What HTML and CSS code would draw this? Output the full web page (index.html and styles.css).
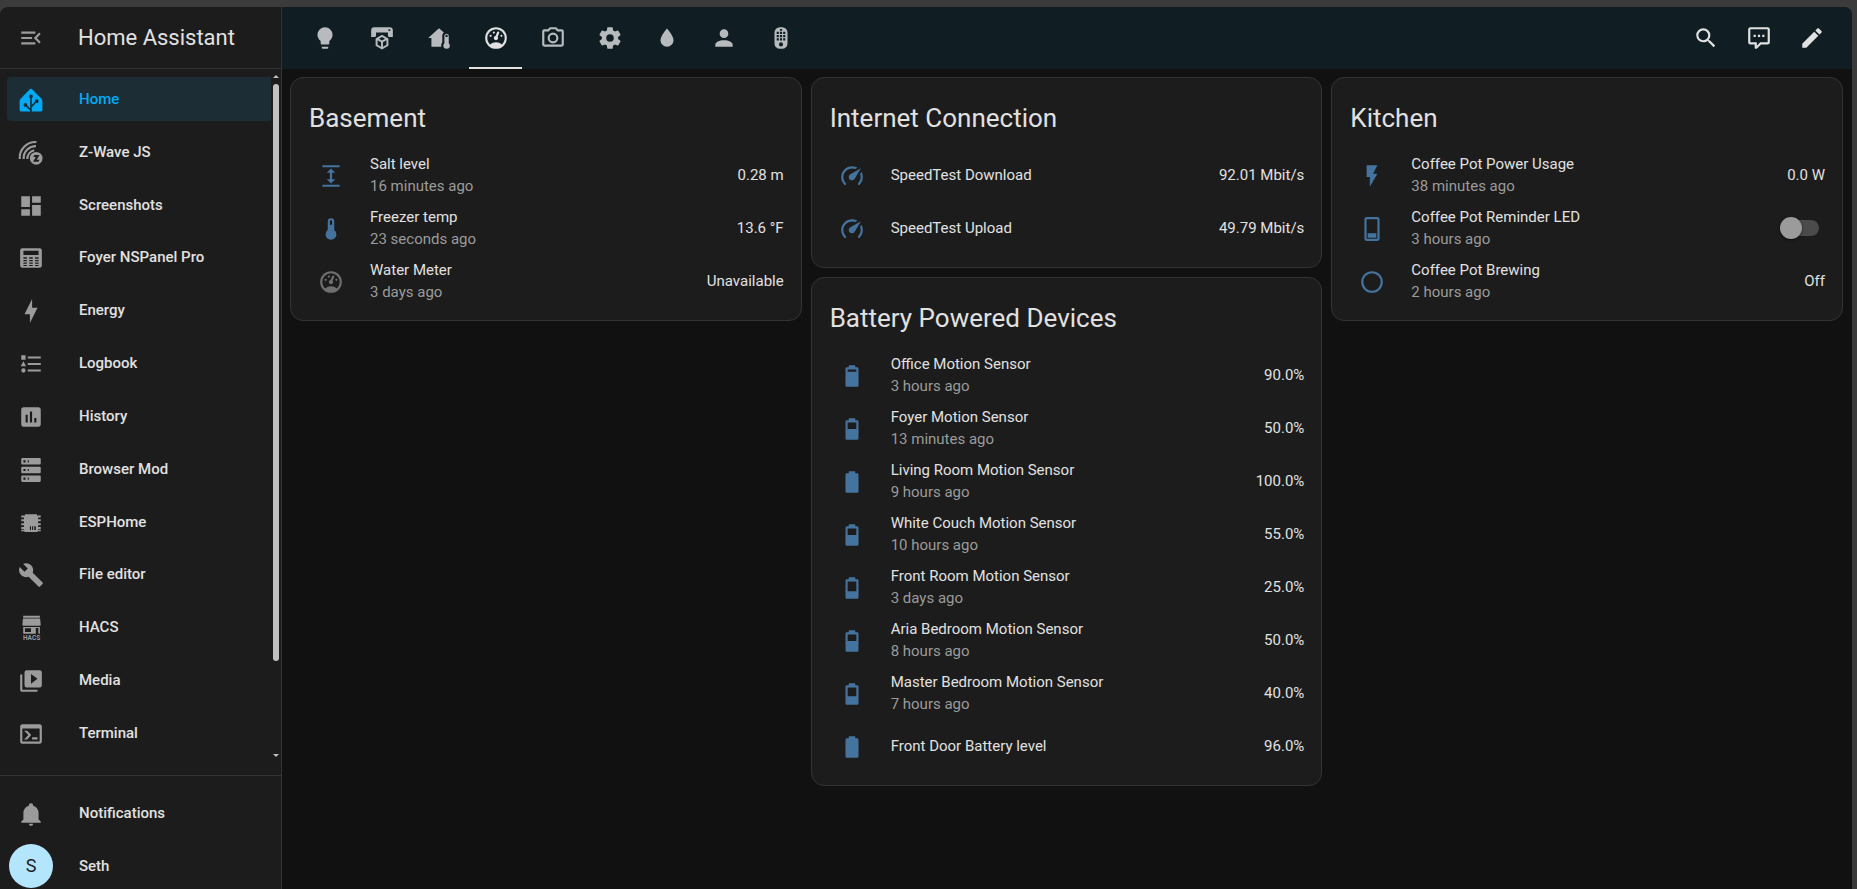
FILE: index.html
```html
<!DOCTYPE html>
<html lang="en">
<head>
<meta charset="utf-8">
<meta name="viewport" content="width=device-width, initial-scale=1">
<title>Home Assistant</title>
<link rel="stylesheet" href="styles.css">
</head>
<body>
<svg class="sprite" aria-hidden="true">
  <symbol id="menu" viewBox="0 0 24 24"><path d="M21,15.61L19.59,17L14.58,12L19.59,7L21,8.39L17.44,12L21,15.61M3,6H16V8H3V6M3,13V11H13V13H3M3,18V16H16V18H3Z"/></symbol>
  <symbol id="ha" viewBox="0 0 24 24"><path d="M11.2 1.9Q12 1.1 12.8 1.9L21.6 10.8Q22.5 11.8 22.5 13V21.2Q22.5 22.5 21.2 22.5H2.8Q1.5 22.5 1.5 21.2V13Q1.5 11.8 2.4 10.8Z"/><g class="tree"><path d="M12 9V23M12 18.4L17.2 13.2M12 21.6L7.2 16.8"/><circle cx="12" cy="8.6" r="1"/><circle cx="17.3" cy="13.1" r="1"/><circle cx="6.9" cy="16.5" r="1"/></g></symbol>
  <symbol id="zwave" viewBox="0 0 24 24"><path d="M16.8,11A5.9,5.9 0 1,0 16.8,22.8A5.9,5.9 0 1,0 16.8,11M18.8,20H13.9L16.5,15.7H14.2L15.1,13.9H19.8L17.2,18.2H19.8L18.8,20Z"/><path class="line" d="M1.6 17.5A14.6 14.6 0 0 1 17 1.9M5.2 17.5A11.4 11.4 0 0 1 16.6 5.6M8.6 17.5A8.4 8.4 0 0 1 15 9.4"/></symbol>
  <symbol id="board" viewBox="0 0 24 24"><path d="M13,3V9H21V3M13,21H21V11H13M3,21H11V15H3M3,13H11V3H3V13Z"/></symbol>
  <symbol id="panel" viewBox="0 0 24 24"><path fill-rule="evenodd" d="M4 3H20A2 2 0 0 1 22 5V19A2 2 0 0 1 20 21H4A2 2 0 0 1 2 19V5A2 2 0 0 1 4 3M5 5.2V9.2H19V5.2ZM5 11.2V12.6H8.2V11.2ZM10.4 11.2V12.6H13.6V11.2ZM15.8 11.2V12.6H19V11.2ZM5 13.8V15.1H8.2V13.8ZM10.4 13.8V15.1H13.6V13.8ZM15.8 13.8V15.1H19V13.8ZM5 16.2V17.4H8.2V16.2ZM10.4 16.2V17.4H13.6V16.2ZM15.8 16.2V17.4H19V16.2ZM5 18.4V19.4H8.2V18.4ZM10.4 18.4V19.4H13.6V18.4ZM15.8 18.4V19.4H19V18.4Z"/></symbol>
  <symbol id="energy" viewBox="0 0 24 24"><path d="M11 15H6L13 1V9H18L11 23V15Z"/></symbol>
  <symbol id="list" viewBox="0 0 24 24"><path d="M5,9.5L7.5,14H2.5L5,9.5M3,4H7V8H3V4M5,20A2,2 0 0,0 7,18A2,2 0 0,0 5,16A2,2 0 0,0 3,18A2,2 0 0,0 5,20M9,5V7H21V5H9M9,19H21V17H9V19M9,11V13H21V11H9Z"/></symbol>
  <symbol id="chart" viewBox="0 0 24 24"><path fill-rule="evenodd" d="M9 17H7V10H9V17M13 17H11V7H13V17M17 17H15V13H17V17M19 3H5C3.9 3 3 3.9 3 5V19C3 20.1 3.9 21 5 21H19C20.1 21 21 20.1 21 19V5C21 3.9 20.1 3 19 3Z"/></symbol>
  <symbol id="server" viewBox="0 0 24 24"><path fill-rule="evenodd" d="M4,1H20A1,1 0 0,1 21,2V6A1,1 0 0,1 20,7H4A1,1 0 0,1 3,6V2A1,1 0 0,1 4,1M4,9H20A1,1 0 0,1 21,10V14A1,1 0 0,1 20,15H4A1,1 0 0,1 3,14V10A1,1 0 0,1 4,9M4,17H20A1,1 0 0,1 21,18V22A1,1 0 0,1 20,23H4A1,1 0 0,1 3,22V18A1,1 0 0,1 4,17M9,5H10V3H9V5M9,13H10V11H9V13M9,21H10V19H9V21M5,3V5H7V3H5M5,11V13H7V11H5M5,19V21H7V19H5Z"/></symbol>
  <symbol id="chip" viewBox="0 0 24 24"><path fill-rule="evenodd" d="M6.5 4H17.5V5H21V7H18.5V8.6H21V10.4H18.5V12.2H21V14H18.5V15.8H21V17.6H18.5V18.2H21V19.6H18V20.4H6V19.6H3V18.2H5.5V17.6H3V15.8H5.5V14H3V12.2H5.5V10.4H3V8.6H5.5V7H3V5H6.5ZM11 15V18.4H12V15ZM13 15V18.4H14V15ZM15 15V18.4H16.4V15Z"/></symbol>
  <symbol id="wrench" viewBox="0 0 24 24"><path d="M22.7,19L13.6,9.9C14.5,7.6 14,4.9 12.1,3C10.1,1 7.1,0.6 4.7,1.7L9,6L6,9L1.6,4.7C0.4,7.1 0.9,10.1 2.9,12.1C4.8,14 7.5,14.5 9.8,13.6L18.9,22.7C19.3,23.1 19.9,23.1 20.3,22.7L22.6,20.4C23.1,20 23.1,19.3 22.7,19Z"/></symbol>
  <symbol id="hacs" viewBox="0 0 24 24" overflow="visible"><path fill-rule="evenodd" d="M4.8 .6H20.2V2.6H4.8ZM4.6 3.2H20.4L21 9Q21 10 20 10H5Q4 10 4 9ZM4.8 11H20.2V17.2H18.8V12H16.4V17.2H4.8ZM6.4 12.2V15.8H12V12.2Z"/><text x="12.5" y="23.2" text-anchor="middle" font-size="6">HACS</text></symbol>
  <symbol id="media" viewBox="0 0 24 24"><path fill-rule="evenodd" d="M4,6H2V20A2,2 0 0,0 4,22H18V20H4V6M20,2H8A2,2 0 0,0 6,4V16A2,2 0 0,0 8,18H20A2,2 0 0,0 22,16V4A2,2 0 0,0 20,2M12,14.5V5.5L18,10L12,14.5Z"/></symbol>
  <symbol id="console" viewBox="0 0 24 24"><path d="M20,19V7H4V19H20M20,3A2,2 0 0,1 22,5V19A2,2 0 0,1 20,21H4A2,2 0 0,1 2,19V5C2,3.89 2.9,3 4,3H20M13,17V15H18V17H13M9.58,13L5.57,9H8.4L11.7,12.3C12.09,12.69 12.09,13.33 11.7,13.72L8.42,17H5.59L9.58,13Z"/></symbol>
  <symbol id="bell" viewBox="0 0 24 24"><path d="M21,19V20H3V19L5,17V11C5,7.9 7.03,5.17 10,4.29C10,4.19 10,4.1 10,4A2,2 0 0,1 12,2A2,2 0 0,1 14,4C14,4.1 14,4.19 14,4.29C16.97,5.17 19,7.9 19,11V17L21,19M14,21A2,2 0 0,1 12,23A2,2 0 0,1 10,21"/></symbol>
  <symbol id="bulb" viewBox="0 0 24 24"><path d="M12,2A7,7 0 0,0 5,9C5,11.38 6.19,13.47 8,14.74V17A1,1 0 0,0 9,18H15A1,1 0 0,0 16,17V14.74C17.81,13.47 19,11.38 19,9A7,7 0 0,0 12,2M9,21A1,1 0 0,0 10,22H14A1,1 0 0,0 15,21V20H9V21Z"/></symbol>
  <symbol id="printer" viewBox="0 0 24 24"><path fill-rule="evenodd" d="M5 2H19A3 3 0 0 1 22 5V11H18.5L17.5 10.3V7H6.5V10.3L5.5 11H2V5A3 3 0 0 1 5 2M18 4V5.6H19.6V4Z"/><path fill-rule="evenodd" d="M12 9L17.9 12.4V19.2L12 22.6L6.1 19.2V12.4ZM12 11L9.2 12.6L12 14.2L14.8 12.6ZM7.9 14.1V18.2L11.1 20V15.9ZM16.1 14.1L12.9 15.9V20L16.1 18.2Z"/></symbol>
  <symbol id="housetemp" viewBox="0 0 24 24"><path fill-rule="evenodd" d="M19 8C20.11 8 21 8.9 21 10V16.76C21.61 17.31 22 18.11 22 19A3 3 0 0 1 16 19C16 18.11 16.39 17.31 17 16.76V10C17 8.9 17.9 8 19 8M19 9C18.45 9 18 9.45 18 10V11H20V10C20 9.45 19.55 9 19 9M12 3L2 12H5V20H14.1C14.03 19.67 14 19.34 14 19C14 17.84 14.4 16.74 15 15.87V10C15 8.72 15.6 7.6 16.5 6.87L12 3Z"/></symbol>
  <symbol id="gauge" viewBox="0 0 24 24"><path d="M12,2A10,10 0 0,0 2,12A10,10 0 0,0 12,22A10,10 0 0,0 22,12A10,10 0 0,0 12,2M12,4A8,8 0 0,1 20,12C20,14.4 19,16.5 17.3,18C15.9,16.7 14,16 12,16C10,16 8.2,16.7 6.7,18C5,16.5 4,14.4 4,12A8,8 0 0,1 12,4M14,5.89C13.62,5.9 13.26,6.15 13.1,6.54L11.81,9.77L11.71,10C11,10.13 10.41,10.6 10.14,11.26C9.73,12.29 10.23,13.45 11.26,13.86C12.29,14.27 13.45,13.77 13.86,12.74C14.12,12.08 14,11.32 13.57,10.76L13.67,10.5L14.96,7.29L14.97,7.26C15.17,6.75 14.92,6.17 14.41,5.96C14.28,5.91 14.15,5.89 14,5.89M10,6A1,1 0 0,0 9,7A1,1 0 0,0 10,8A1,1 0 0,0 11,7A1,1 0 0,0 10,6M7,9A1,1 0 0,0 6,10A1,1 0 0,0 7,11A1,1 0 0,0 8,10A1,1 0 0,0 7,9M17,9A1,1 0 0,0 16,10A1,1 0 0,0 17,11A1,1 0 0,0 18,10A1,1 0 0,0 17,9Z"/></symbol>
  <symbol id="camera" viewBox="0 0 24 24"><path d="M20,4H16.83L15,2H9L7.17,4H4A2,2 0 0,0 2,6V18A2,2 0 0,0 4,20H20A2,2 0 0,0 22,18V6A2,2 0 0,0 20,4M20,18H4V6H8.05L9.88,4H14.12L15.95,6H20V18M12,7A5,5 0 0,0 7,12A5,5 0 0,0 12,17A5,5 0 0,0 17,12A5,5 0 0,0 12,7M12,15A3,3 0 0,1 9,12A3,3 0 0,1 12,9A3,3 0 0,1 15,12A3,3 0 0,1 12,15Z"/></symbol>
  <symbol id="cog" viewBox="0 0 24 24"><path d="M12,15.5A3.5,3.5 0 0,1 8.5,12A3.5,3.5 0 0,1 12,8.5A3.5,3.5 0 0,1 15.5,12A3.5,3.5 0 0,1 12,15.5M19.43,12.97C19.47,12.65 19.5,12.33 19.5,12C19.5,11.67 19.47,11.34 19.43,11L21.54,9.37C21.73,9.22 21.78,8.95 21.66,8.73L19.66,5.27C19.54,5.05 19.27,4.96 19.05,5.05L16.56,6.05C16.04,5.66 15.5,5.32 14.87,5.07L14.5,2.42C14.46,2.18 14.25,2 14,2H10C9.75,2 9.54,2.18 9.5,2.42L9.13,5.07C8.5,5.32 7.96,5.66 7.44,6.05L4.95,5.05C4.73,4.96 4.46,5.05 4.34,5.27L2.34,8.73C2.21,8.95 2.27,9.22 2.46,9.37L4.57,11C4.53,11.34 4.5,11.67 4.5,12C4.5,12.33 4.53,12.65 4.57,12.97L2.46,14.63C2.27,14.78 2.21,15.05 2.34,15.27L4.34,18.73C4.46,18.95 4.73,19.03 4.95,18.95L7.44,17.94C7.96,18.34 8.5,18.68 9.13,18.93L9.5,21.58C9.54,21.82 9.75,22 10,22H14C14.25,22 14.46,21.82 14.5,21.58L14.87,18.93C15.5,18.67 16.04,18.34 16.56,17.94L19.05,18.95C19.27,19.03 19.54,18.95 19.66,18.73L21.66,15.27C21.78,15.05 21.73,14.78 21.54,14.63L19.43,12.97Z"/></symbol>
  <symbol id="water" viewBox="0 0 24 24"><path d="M12,20A6,6 0 0,1 6,14C6,10 12,3.25 12,3.25C12,3.25 18,10 18,14A6,6 0 0,1 12,20Z"/></symbol>
  <symbol id="account" viewBox="0 0 24 24"><path d="M12,4A4,4 0 0,1 16,8A4,4 0 0,1 12,12A4,4 0 0,1 8,8A4,4 0 0,1 12,4M12,14C16.42,14 20,15.79 20,18V20H4V18C4,15.79 7.58,14 12,14Z"/></symbol>
  <symbol id="remote" viewBox="0 0 24 24"><path fill-rule="evenodd" d="M11 2H13A5 5 0 0 1 18 7V17A5 5 0 0 1 13 22H11A5 5 0 0 1 6 17V7A5 5 0 0 1 11 2M11 3.6V5.2H13V3.6ZM8 6.2V8.2H10V6.2ZM11 6.2V8.2H13V6.2ZM14 6.2V8.2H16V6.2ZM8 9.2V11.2H10V9.2ZM11 9.2V11.2H13V9.2ZM14 9.2V11.2H16V9.2ZM8 12.2V14.2H10V12.2ZM11 12.2V14.2H13V12.2ZM14 12.2V14.2H16V12.2ZM12 16A1.9 1.9 0 0 0 12 19.8A1.9 1.9 0 0 0 12 16Z"/></symbol>
  <symbol id="search" viewBox="0 0 24 24"><path d="M9.5,3A6.5,6.5 0 0,1 16,9.5C16,11.11 15.41,12.59 14.44,13.73L14.71,14H15.5L20.5,19L19,20.5L14,15.5V14.71L13.73,14.44C12.59,15.41 11.11,16 9.5,16A6.5,6.5 0 0,1 3,9.5A6.5,6.5 0 0,1 9.5,3M9.5,5C7,5 5,7 5,9.5C5,12 7,14 9.5,14C12,14 14,12 14,9.5C14,7 12,5 9.5,5Z"/></symbol>
  <symbol id="comment" viewBox="0 0 24 24"><path d="M9,22A1,1 0 0,1 8,21V18H4A2,2 0 0,1 2,16V4C2,2.89 2.9,2 4,2H20A2,2 0 0,1 22,4V16A2,2 0 0,1 20,18H13.9L10.2,21.71C10,21.9 9.75,22 9.5,22V22H9M10,16V19.08L13.08,16H20V4H4V16H10M17,11H15V9H17V11M13,11H11V9H13V11M9,11H7V9H9V11Z"/></symbol>
  <symbol id="pencil" viewBox="0 0 24 24"><path d="M20.71,7.04C21.1,6.65 21.1,6 20.71,5.63L18.37,3.29C18,2.9 17.35,2.9 16.96,3.29L15.12,5.12L18.87,8.87M3,17.25V21H6.75L17.81,9.93L14.06,6.18L3,17.25Z"/></symbol>
  <symbol id="level" viewBox="0 0 24 24"><path d="M4 2H20V4H4ZM4 20H20V22H4ZM12 5L16 9H13V15H16L12 19L8 15H11V9H8Z"/></symbol>
  <symbol id="thermo" viewBox="0 0 24 24"><path fill-rule="evenodd" d="M15 13V5A3 3 0 0 0 9 5V13A5 5 0 1 0 15 13M12 4A1 1 0 0 1 13 5V8H11V5A1 1 0 0 1 12 4Z"/></symbol>
  <symbol id="speed" viewBox="0 0 24 24"><path d="M12,16A3,3 0 0,1 9,13C9,11.88 9.61,10.9 10.5,10.39L20.21,4.77L14.68,14.35C14.18,15.33 13.17,16 12,16M12,3C13.81,3 15.5,3.5 16.97,4.32L14.87,5.53C14,5.19 13,5 12,5A8,8 0 0,0 4,13C4,15.21 4.89,17.21 6.34,18.65H6.35C6.74,19.04 6.74,19.67 6.35,20.06C5.96,20.45 5.32,20.45 4.93,20.07V20.07C3.12,18.26 2,15.76 2,13A10,10 0 0,1 12,3M22,13C22,15.76 20.88,18.26 19.07,20.07V20.07C18.68,20.45 18.05,20.45 17.66,20.06C17.27,19.67 17.27,19.04 17.66,18.65V18.65C19.11,17.2 20,15.21 20,13C20,12 19.81,11 19.46,10.1L20.67,8C21.5,9.5 22,11.18 22,13Z"/></symbol>
  <symbol id="bat100" viewBox="0 0 24 24"><path d="M16.67,4H15V2H9V4H7.33A1.33,1.33 0 0,0 6,5.33V20.67C6,21.4 6.6,22 7.33,22H16.67A1.33,1.33 0 0,0 18,20.67V5.33C18,4.6 17.4,4 16.67,4Z"/></symbol>
  <symbol id="bat90" viewBox="0 0 24 24"><path fill-rule="evenodd" d="M16.67,4H15V2H9V4H7.33A1.33,1.33 0 0,0 6,5.33V20.67C6,21.4 6.6,22 7.33,22H16.67A1.33,1.33 0 0,0 18,20.67V5.33C18,4.6 17.4,4 16.67,4M8 6H16V8H8Z"/></symbol>
  <symbol id="bat50" viewBox="0 0 24 24"><path fill-rule="evenodd" d="M16.67,4H15V2H9V4H7.33A1.33,1.33 0 0,0 6,5.33V20.67C6,21.4 6.6,22 7.33,22H16.67A1.33,1.33 0 0,0 18,20.67V5.33C18,4.6 17.4,4 16.67,4M8 6H16V12H8Z"/></symbol>
  <symbol id="bat40" viewBox="0 0 24 24"><path fill-rule="evenodd" d="M16.67,4H15V2H9V4H7.33A1.33,1.33 0 0,0 6,5.33V20.67C6,21.4 6.6,22 7.33,22H16.67A1.33,1.33 0 0,0 18,20.67V5.33C18,4.6 17.4,4 16.67,4M8 6H16V14H8Z"/></symbol>
  <symbol id="bat25" viewBox="0 0 24 24"><path fill-rule="evenodd" d="M16.67,4H15V2H9V4H7.33A1.33,1.33 0 0,0 6,5.33V20.67C6,21.4 6.6,22 7.33,22H16.67A1.33,1.33 0 0,0 18,20.67V5.33C18,4.6 17.4,4 16.67,4M8 6H16V15H8Z"/></symbol>
  <symbol id="flash" viewBox="0 0 24 24"><path d="M7,2V13H10V22L17,10H13L17,2H7Z"/></symbol>
  <symbol id="led" viewBox="0 0 24 24"><path fill-rule="evenodd" d="M7 1H17A2 2 0 0 1 19 3V21A2 2 0 0 1 17 23H7A2 2 0 0 1 5 21V3A2 2 0 0 1 7 1M7 3V21H17V3ZM8 16H16V20H8Z"/></symbol>
  <symbol id="circle" viewBox="0 0 24 24"><path d="M12,20A8,8 0 0,1 4,12A8,8 0 0,1 12,4A8,8 0 0,1 20,12A8,8 0 0,1 12,20M12,2A10,10 0 0,0 2,12A10,10 0 0,0 12,22A10,10 0 0,0 22,12A10,10 0 0,0 12,2Z"/></symbol>
</svg>

<div class="app">
  <aside class="sidebar">
    <header class="sidebar-head">
      <button class="icon-btn" aria-label="Collapse sidebar"><svg class="icon"><use href="#menu"/></svg></button>
      <span class="brand">Home Assistant</span>
    </header>
    <div class="sidebar-body">
      <nav class="nav" aria-label="Main">
        <a class="nav-item active" href="#home"><svg class="icon"><use href="#ha"/></svg>Home</a>
        <a class="nav-item" href="#zwave-js"><svg class="icon"><use href="#zwave"/></svg>Z-Wave JS</a>
        <a class="nav-item" href="#screenshots"><svg class="icon"><use href="#board"/></svg>Screenshots</a>
        <a class="nav-item" href="#nspanel"><svg class="icon"><use href="#panel"/></svg>Foyer NSPanel Pro</a>
        <a class="nav-item" href="#energy-view"><svg class="icon"><use href="#energy"/></svg>Energy</a>
        <a class="nav-item" href="#logbook"><svg class="icon"><use href="#list"/></svg>Logbook</a>
        <a class="nav-item" href="#history"><svg class="icon"><use href="#chart"/></svg>History</a>
        <a class="nav-item" href="#browser-mod"><svg class="icon"><use href="#server"/></svg>Browser Mod</a>
        <a class="nav-item" href="#esphome"><svg class="icon"><use href="#chip"/></svg>ESPHome</a>
        <a class="nav-item" href="#file-editor"><svg class="icon"><use href="#wrench"/></svg>File editor</a>
        <a class="nav-item" href="#hacs-view"><svg class="icon"><use href="#hacs"/></svg>HACS</a>
        <a class="nav-item" href="#media-view"><svg class="icon"><use href="#media"/></svg>Media</a>
        <a class="nav-item" href="#terminal"><svg class="icon"><use href="#console"/></svg>Terminal</a>
      </nav>
      <div class="rail" aria-hidden="true">
        <span class="arrow up"></span>
        <span class="thumb"></span>
        <span class="track"></span>
        <span class="arrow down"></span>
      </div>
    </div>
    <footer class="sidebar-foot">
      <a class="nav-item" href="#notifications"><svg class="icon"><use href="#bell"/></svg>Notifications</a>
      <a class="nav-item profile" href="#profile"><span class="avatar">S</span>Seth</a>
    </footer>
  </aside>

  <div class="main">
    <header class="toolbar">
      <nav class="tabs" aria-label="Views">
        <a class="tab" href="#lights" aria-label="Lights"><svg class="icon"><use href="#bulb"/></svg></a>
        <a class="tab" href="#printing" aria-label="3D printer"><svg class="icon"><use href="#printer"/></svg></a>
        <a class="tab" href="#climate" aria-label="Climate"><svg class="icon"><use href="#housetemp"/></svg></a>
        <a class="tab current" href="#sensors" aria-label="Sensors"><svg class="icon"><use href="#gauge"/></svg></a>
        <a class="tab" href="#cameras" aria-label="Cameras"><svg class="icon"><use href="#camera"/></svg></a>
        <a class="tab" href="#system" aria-label="System"><svg class="icon"><use href="#cog"/></svg></a>
        <a class="tab" href="#water-view" aria-label="Water"><svg class="icon"><use href="#water"/></svg></a>
        <a class="tab" href="#people" aria-label="People"><svg class="icon"><use href="#account"/></svg></a>
        <a class="tab" href="#remotes" aria-label="Remotes"><svg class="icon"><use href="#remote"/></svg></a>
      </nav>
      <div class="actions">
        <button class="icon-btn" aria-label="Search"><svg class="icon"><use href="#search"/></svg></button>
        <button class="icon-btn" aria-label="Assist"><svg class="icon"><use href="#comment"/></svg></button>
        <button class="icon-btn" aria-label="Edit dashboard"><svg class="icon"><use href="#pencil"/></svg></button>
      </div>
    </header>

    <main class="board">
      <div class="column">
        <section class="card">
          <h2 class="card-title">Basement</h2>
          <ul class="rows">
            <li class="row"><svg class="icon"><use href="#level"/></svg><div class="info"><span>Salt level</span><span class="ago">16 minutes ago</span></div><span>0.28 m</span></li>
            <li class="row"><svg class="icon"><use href="#thermo"/></svg><div class="info"><span>Freezer temp</span><span class="ago">23 seconds ago</span></div><span>13.6 °F</span></li>
            <li class="row unavailable"><svg class="icon"><use href="#gauge"/></svg><div class="info"><span>Water Meter</span><span class="ago">3 days ago</span></div><span>Unavailable</span></li>
          </ul>
        </section>
      </div>
      <div class="column">
        <section class="card">
          <h2 class="card-title">Internet Connection</h2>
          <ul class="rows">
            <li class="row"><svg class="icon"><use href="#speed"/></svg><div class="info"><span>SpeedTest Download</span></div><span>92.01 Mbit/s</span></li>
            <li class="row"><svg class="icon"><use href="#speed"/></svg><div class="info"><span>SpeedTest Upload</span></div><span>49.79 Mbit/s</span></li>
          </ul>
        </section>
        <section class="card">
          <h2 class="card-title">Battery Powered Devices</h2>
          <ul class="rows">
            <li class="row"><svg class="icon"><use href="#bat90"/></svg><div class="info"><span>Office Motion Sensor</span><span class="ago">3 hours ago</span></div><span>90.0%</span></li>
            <li class="row"><svg class="icon"><use href="#bat50"/></svg><div class="info"><span>Foyer Motion Sensor</span><span class="ago">13 minutes ago</span></div><span>50.0%</span></li>
            <li class="row"><svg class="icon"><use href="#bat100"/></svg><div class="info"><span>Living Room Motion Sensor</span><span class="ago">9 hours ago</span></div><span>100.0%</span></li>
            <li class="row"><svg class="icon"><use href="#bat50"/></svg><div class="info"><span>White Couch Motion Sensor</span><span class="ago">10 hours ago</span></div><span>55.0%</span></li>
            <li class="row"><svg class="icon"><use href="#bat25"/></svg><div class="info"><span>Front Room Motion Sensor</span><span class="ago">3 days ago</span></div><span>25.0%</span></li>
            <li class="row"><svg class="icon"><use href="#bat50"/></svg><div class="info"><span>Aria Bedroom Motion Sensor</span><span class="ago">8 hours ago</span></div><span>50.0%</span></li>
            <li class="row"><svg class="icon"><use href="#bat40"/></svg><div class="info"><span>Master Bedroom Motion Sensor</span><span class="ago">7 hours ago</span></div><span>40.0%</span></li>
            <li class="row"><svg class="icon"><use href="#bat100"/></svg><div class="info"><span>Front Door Battery level</span></div><span>96.0%</span></li>
          </ul>
        </section>
      </div>
      <div class="column">
        <section class="card">
          <h2 class="card-title">Kitchen</h2>
          <ul class="rows">
            <li class="row"><svg class="icon"><use href="#flash"/></svg><div class="info"><span>Coffee Pot Power Usage</span><span class="ago">38 minutes ago</span></div><span>0.0 W</span></li>
            <li class="row"><svg class="icon"><use href="#led"/></svg><div class="info"><label for="led-switch">Coffee Pot Reminder LED</label><span class="ago">3 hours ago</span></div><input class="switch" type="checkbox" role="switch" id="led-switch"></li>
            <li class="row"><svg class="icon"><use href="#circle"/></svg><div class="info"><span>Coffee Pot Brewing</span><span class="ago">2 hours ago</span></div><span>Off</span></li>
          </ul>
        </section>
      </div>
    </main>
  </div>
</div>
</body>
</html>
```
FILE: styles.css
```css
:root {
  --frame: #3b3b3b;
  --page: #111111;
  --surface: #1c1c1c;
  --line: #333333;
  --text: #e1e1e1;
  --muted: #9b9b9b;
  --state: #44739e;
  --accent: #03a9f4;
}

* { box-sizing: border-box; }

body {
  margin: 0;
  background: var(--frame);
  color: var(--text);
  font: 15px/22px Roboto, sans-serif;
}

a { color: inherit; text-decoration: none; }

button {
  border: 0;
  padding: 0;
  background: none;
  color: inherit;
  cursor: pointer;
}

.sprite { display: none; }

.icon {
  width: 26px;
  height: 26px;
  flex: none;
  display: block;
  fill: currentColor;
  overflow: visible;
}

.line { fill: none; stroke: currentColor; stroke-width: 2; }
.tree { fill: #1c2d36; stroke: #1c2d36; stroke-width: 1.5; }
#hacs text { font-weight: 700; }

.app {
  display: flex;
  min-height: 100vh;
  padding: 7px 5px 0 0;
}

/* Sidebar */
.sidebar {
  display: flex;
  flex-direction: column;
  flex: none;
  width: 282px;
  border-right: 1px solid var(--line);
  border-top-left-radius: 8px;
  background: var(--surface);
}

.sidebar-head {
  display: flex;
  align-items: center;
  gap: 25px;
  height: 62px;
  padding-left: 9px;
  border-bottom: 1px solid var(--line);
}

.brand { font-size: 22px; }

.icon-btn {
  display: grid;
  place-items: center;
  width: 44px;
  height: 44px;
}

.sidebar-head .icon-btn { color: var(--muted); }

.sidebar-body { display: flex; flex: 1; gap: 2px; padding-right: 2px; }

.nav {
  display: flex;
  flex: 1;
  flex-direction: column;
  justify-content: space-between;
  padding: 8px 0 20px 7px;
}

.nav-item {
  display: flex;
  align-items: center;
  gap: 35px;
  height: 44px;
  padding-left: 11px;
  border-radius: 4px 0 0 4px;
  font-weight: 500;
}

.nav-item .icon { margin-top: 2px; color: var(--muted); }
.nav-item.active { background: #1c2d36; color: var(--accent); }
.nav-item.active .icon { color: var(--accent); }

.rail {
  display: flex;
  flex-direction: column;
  width: 6px;
  padding: 6px 0 18px;
}

.thumb { flex: 577; margin-top: 6px; border-radius: 3px; background: #c1c1c1; }
.track { flex: 93; }
.arrow { border: 3px solid transparent; }
.up { border-top: 0; border-bottom-color: #c1c1c1; }
.down { border-bottom: 0; border-top-color: #c1c1c1; }

.sidebar-foot {
  display: flex;
  flex-direction: column;
  gap: 9px;
  padding: 15px 0 1px 7px;
  border-top: 1px solid var(--line);
}

.profile { gap: 26px; padding-left: 2px; }

.avatar {
  display: grid;
  place-items: center;
  width: 44px;
  height: 44px;
  border-radius: 50%;
  background: #b3e5fc;
  color: #212121;
  font-size: 18px;
  font-weight: 400;
}

/* Main area */
.main {
  display: flex;
  flex: 1;
  flex-direction: column;
  min-width: 0;
  border-top-right-radius: 8px;
  background: var(--page);
}

.toolbar {
  display: flex;
  justify-content: space-between;
  height: 62px;
  padding: 0 18px 0 16px;
  border-top-right-radius: 8px;
  background: #101e24;
}

.tabs { display: flex; gap: 4px; }

.tab {
  display: grid;
  place-items: center;
  width: 53px;
  border-bottom: 2px solid transparent;
  border-top: 2px solid transparent;
  color: #b7bbbd;
}

.tab.current { border-bottom-color: var(--text); color: var(--text); }

.actions { display: flex; align-items: center; gap: 9px; }

.board {
  display: grid;
  grid-template-columns: repeat(3, minmax(0, 1fr));
  align-items: start;
  gap: 9px;
  padding: 8px 9px 8px 8px;
}

.column { display: grid; gap: 9px; }

.card {
  padding: 13px 17px 17px;
  border: 1px solid var(--line);
  border-radius: 13px;
  background: var(--surface);
}

.card-title {
  margin: 0 0 7px;
  padding-left: 1px;
  font-size: 26px;
  font-weight: 400;
  line-height: 55px;
}

.rows {
  display: grid;
  gap: 9px;
  margin: 0;
  padding: 0;
  list-style: none;
}

.row {
  display: flex;
  align-items: center;
  height: 44px;
}

.row .icon { margin: 2px 26px 0 10px; color: var(--state); }
.unavailable .icon { color: #6f6f6f; }
.row.unavailable .icon { color: #6f6f6f; }
.info { display: flex; flex: 1; flex-direction: column; }
.ago { color: var(--muted); }

.switch {
  appearance: none;
  display: flex;
  align-items: center;
  width: 36px;
  height: 16px;
  margin: 0 6px 0 0;
  border-radius: 8px;
  background: #4b4b4b;
  cursor: pointer;
}

.switch::before {
  content: "";
  width: 22px;
  height: 22px;
  margin-left: -3px;
  border-radius: 50%;
  background: var(--muted);
  box-shadow: 0 1px 3px rgb(0 0 0 / 50%);
}

.switch:checked { justify-content: flex-end; }
```
